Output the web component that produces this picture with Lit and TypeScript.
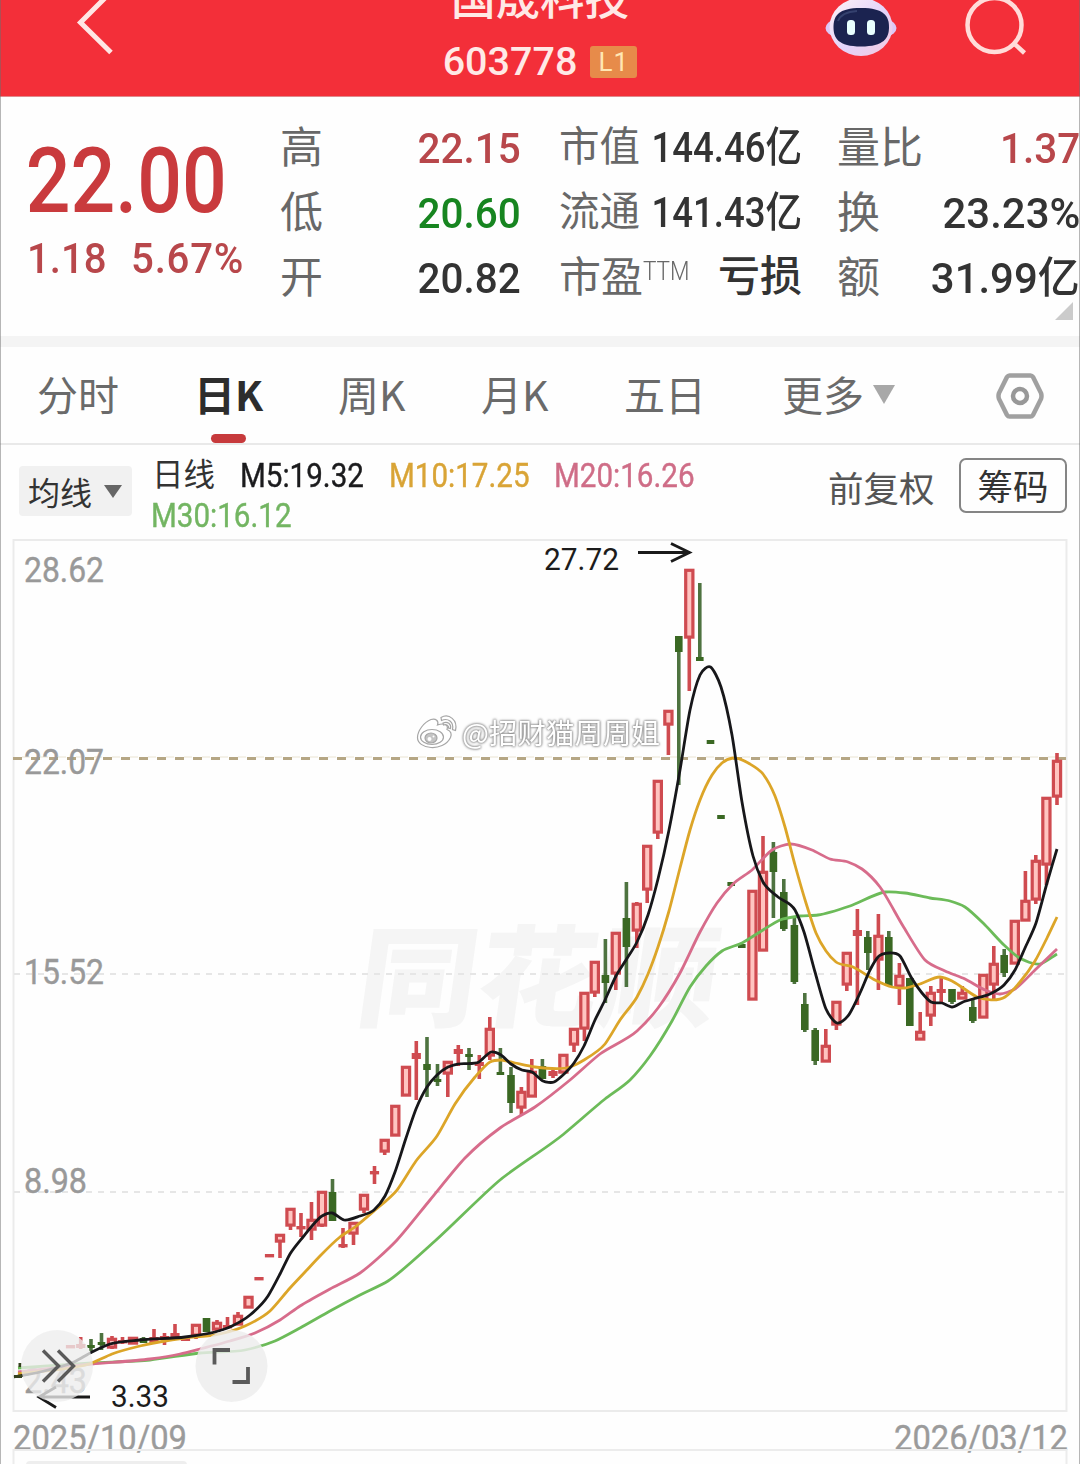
import { LitElement, html, svg, css } from "lit";
import { customElement } from "lit/decorators.js";

type Candle = [x: number, high: number, top: number, bottom: number, low: number, up: 0 | 1];
type Point = [number, number];

const CANDLES: Candle[] = [
  [70.5, 1345, 1345, 1347, 1347, 1], [80.7, 1337, 1344, 1348, 1349, 1], [91, 1339, 1345, 1347, 1351, 0],
  [101.5, 1333, 1342, 1345, 1350, 0], [112, 1336, 1338, 1348, 1349, 1], [122.5, 1337, 1340, 1342, 1344, 1],
  [133, 1337, 1337, 1344, 1344, 1], [143.5, 1337, 1338, 1343, 1343, 0], [154, 1329, 1337, 1343, 1344, 1],
  [164.5, 1333, 1336, 1340, 1345, 1], [175, 1324, 1333, 1338, 1340, 1], [185.5, 1337, 1337, 1341, 1341, 1],
  [196, 1324, 1324, 1336, 1339, 1], [206.5, 1318, 1318, 1332, 1332, 0], [217, 1320, 1322, 1330, 1332, 1],
  [227.5, 1317, 1325, 1328, 1328, 1], [238, 1312, 1315, 1325, 1325, 1], [248.5, 1296, 1296, 1308, 1308, 1],
  [259, 1278, 1277, 1280, 1280, 1], [269.5, 1255, 1254, 1257, 1257, 1], [280, 1234, 1234, 1242, 1258, 1],
  [290.5, 1208, 1208, 1226, 1230, 1], [301, 1213, 1226, 1229, 1237, 1], [311.5, 1202, 1219, 1230, 1240, 1],
  [322, 1191, 1191, 1226, 1227, 1], [332.5, 1179, 1192, 1221, 1221, 0], [343, 1228, 1244, 1247, 1248, 1],
  [353.5, 1222, 1222, 1234, 1245, 1], [364, 1194, 1194, 1210, 1213, 1], [374.5, 1166, 1171, 1174, 1184, 1],
  [384.7, 1139, 1139, 1152, 1155, 1], [395.3, 1105, 1105, 1136, 1136, 1], [406, 1066, 1066, 1096, 1096, 1],
  [416.3, 1041, 1053, 1059, 1100, 1], [427, 1037, 1064, 1070, 1097, 0], [437.5, 1064, 1079, 1082, 1086, 0],
  [447.8, 1061, 1061, 1074, 1097, 1], [458.3, 1045, 1049, 1054, 1066, 1], [469, 1048, 1054, 1057, 1070, 0],
  [479.3, 1055, 1062, 1066, 1079, 1], [489.8, 1017, 1028, 1056, 1060, 1], [500.4, 1048, 1072, 1075, 1075, 0],
  [511, 1067, 1075, 1103, 1113, 0], [521.4, 1087, 1091, 1108, 1115, 1], [531.8, 1059, 1071, 1097, 1097, 1],
  [542.4, 1059, 1066, 1079, 1079, 0], [553, 1068, 1071, 1076, 1078, 1], [563.4, 1054, 1054, 1073, 1073, 1],
  [574, 1028, 1028, 1045, 1052, 1], [584.4, 992, 992, 1029, 1041, 1], [594.8, 961, 961, 993, 997, 1],
  [605.4, 939, 975, 983, 1003, 0], [615.8, 932, 932, 974, 990, 1], [626.4, 882, 918, 947, 987, 0],
  [636.8, 902, 903, 931, 948, 1], [647.2, 845, 845, 890, 903, 1], [657.8, 780, 780, 833, 839, 1],
  [668.4, 710, 710, 725, 755, 1], [678.8, 636, 636, 652, 785, 0], [689.3, 569, 569, 638, 691, 1],
  [699.8, 583, 657, 661, 661, 0], [710.5, 740, 740, 744, 744, 0], [721, 815, 815, 819, 819, 0],
  [731.2, 882, 882, 886, 886, 0], [741.8, 944, 944, 948, 948, 0], [752.4, 890, 890, 1000, 1000, 1],
  [763, 836, 871, 951, 951, 1], [773.4, 842, 852, 872, 918, 0], [783.8, 879, 892, 929, 931, 0],
  [794.4, 918, 925, 982, 984, 0], [804.8, 993, 1004, 1030, 1032, 0], [815.2, 1028, 1030, 1061, 1065, 0],
  [825.8, 1029, 1045, 1062, 1062, 1], [836.4, 1001, 1001, 1025, 1030, 1], [846.8, 952, 952, 985, 991, 1],
  [857.4, 909, 930, 936, 1005, 1], [867.8, 931, 937, 953, 970, 0], [878.4, 914, 935, 960, 990, 1],
  [888.8, 931, 937, 986, 986, 0], [899.4, 963, 975, 987, 1005, 1], [909.8, 978, 978, 1026, 1026, 0],
  [920.2, 1012, 1031, 1040, 1040, 1], [930.8, 986, 992, 1016, 1026, 1], [941.2, 976, 989, 993, 1002, 1],
  [952, 989, 989, 1002, 1004, 0], [962.3, 986, 992, 999, 999, 1], [972.8, 1000, 1007, 1021, 1023, 0],
  [983.3, 974, 974, 1018, 1018, 1], [993.8, 946, 963, 985, 1001, 1], [1004.2, 949, 955, 973, 977, 0],
  [1014.8, 920, 920, 964, 964, 1], [1025.4, 871, 900, 921, 921, 1], [1035.8, 855, 860, 900, 904, 1],
  [1046.4, 797, 797, 865, 885, 1], [1057, 753, 760, 797, 805, 1],
];

const AVERAGES: { color: string; points: Point[] }[] = [
  {
    color: "#6cbb59",
    points: [[18, 1368], [92, 1363], [150, 1360], [200, 1353], [245, 1350], [275, 1341], [300, 1328], [330, 1311],
      [360, 1295], [388, 1281], [435, 1241], [500, 1180], [560, 1137], [605, 1099], [630, 1080], [650, 1056],
      [672, 1021], [690, 987], [706, 966], [722, 951], [742, 943], [763, 930], [780, 920], [800, 916], [818, 915],
      [850, 906], [885, 892], [905, 893], [930, 898], [950, 901], [965, 907], [985, 925], [1004, 945], [1018, 957],
      [1040, 964], [1057, 954]],
  },
  {
    color: "#d76c8b",
    points: [[18, 1372], [92, 1364], [150, 1359], [180, 1354], [200, 1349], [230, 1341], [255, 1333], [280, 1320],
      [300, 1306], [330, 1289], [360, 1273], [397, 1240], [430, 1200], [465, 1158], [500, 1128], [535, 1107],
      [570, 1080], [600, 1054], [637, 1031], [658, 1008], [680, 973], [700, 932], [717, 903], [733, 884], [752, 870],
      [772, 850], [790, 844], [812, 850], [830, 859], [848, 862], [862, 869], [880, 887], [903, 926], [925, 960],
      [945, 971], [965, 979], [985, 990], [1000, 994], [1015, 989], [1035, 970], [1057, 949]],
  },
  {
    color: "#dca528",
    points: [[18, 1374], [92, 1363], [112, 1354], [140, 1346], [185, 1338], [215, 1335], [245, 1326], [270, 1311],
      [290, 1288], [305, 1272], [320, 1256], [340, 1237], [355, 1227], [374, 1211], [397, 1190], [416, 1161],
      [437, 1136], [455, 1104], [475, 1077], [490, 1062], [501, 1060], [515, 1063], [535, 1067], [570, 1067],
      [584, 1060], [605, 1044], [620, 1020], [637, 997], [648, 974], [658, 947], [669, 911], [680, 868], [690, 830],
      [700, 800], [712, 775], [722, 763], [733, 758], [750, 764], [763, 774], [775, 796], [785, 827], [795, 865],
      [806, 903], [816, 933], [826, 951], [836, 962], [853, 967], [875, 980], [892, 987], [905, 988], [920, 984],
      [940, 977], [952, 981], [963, 988], [977, 997], [1005, 997], [1020, 982], [1035, 961], [1047, 938], [1057, 917]],
  },
  {
    color: "#17171a",
    points: [[14, 1377], [40, 1372], [74, 1362], [92, 1352], [110, 1344], [140, 1340], [185, 1337], [215, 1332],
      [232, 1326], [250, 1315], [268, 1296], [280, 1274], [290, 1254], [303, 1237], [322, 1216], [332, 1213],
      [344, 1220], [360, 1216], [374, 1210], [385, 1196], [395, 1172], [406, 1138], [416, 1109], [427, 1087],
      [437, 1075], [448, 1067], [458, 1064], [479, 1062], [491, 1052], [501, 1055], [511, 1064], [522, 1070],
      [532, 1072], [543, 1081], [554, 1082], [563, 1075], [574, 1063], [584, 1046], [595, 1020], [605, 1000],
      [616, 976], [626, 960], [637, 942], [648, 915], [658, 879], [669, 830], [680, 770], [690, 710], [700, 675],
      [710.5, 667], [721, 687], [732, 735], [742, 802], [753, 856], [763, 882], [778, 897], [795, 910], [804, 932],
      [815, 972], [826, 1009], [837, 1023], [848, 1016], [860, 993], [870, 970], [878, 957], [889, 953], [900, 956],
      [911, 977], [922, 993], [931, 1002], [942, 1003], [952, 1007], [963, 1002], [973, 999], [990, 994], [1004, 985],
      [1015, 970], [1025, 948], [1036, 923], [1047, 883], [1057, 849]],
  },
];

/** Joins the points with cubic segments whose tangents respect uneven x steps. */
function smooth(points: Point[]): string {
  const slope = points.map((p, i) => {
    const a = points[Math.max(i - 1, 0)];
    const b = points[Math.min(i + 1, points.length - 1)];
    if (a === p || b === p) return (b[1] - a[1]) / (b[0] - a[0]);
    const left = (p[1] - a[1]) / (p[0] - a[0]);
    const right = (b[1] - p[1]) / (b[0] - p[0]);
    const wl = b[0] - p[0];
    const wr = p[0] - a[0];
    return (left * wl + right * wr) / (wl + wr);
  });
  let d = `M${points[0][0]} ${points[0][1]}`;
  for (let i = 0; i < points.length - 1; i++) {
    const [x1, y1] = points[i];
    const [x2, y2] = points[i + 1];
    const step = (x2 - x1) / 4;
    d += `C${x1 + step} ${y1 + slope[i] * step} ${x2 - step} ${y2 - slope[i + 1] * step} ${x2} ${y2}`;
  }
  return d;
}

@customElement("stock-header")
class StockHeader extends LitElement {
  static styles = css`
    :host { display: block; height: 97px; overflow: hidden; background: #f32f39; border-bottom: 1px solid #e08a8d; box-sizing: border-box; }
    .bar { display: grid; grid-template-columns: 400px 280px 1fr; height: 97px; }
    .back { display: block; }
    .center { display: flex; flex-direction: column; align-items: center; margin-top: -30px; color: #ffe9e6; }
    .name { font: 500 44.5px/52px "Noto Sans CJK SC", sans-serif; height: 52px; }
    .codes { display: flex; align-items: center; gap: 13px; margin-top: 20px; }
    .code { font: 500 39.5px/40px Roboto, sans-serif; }
    .badge { width: 47px; height: 32px; border-radius: 3px; background: #e78b4a; color: #ffe7b4; font: 400 26px/33px Roboto, sans-serif; text-align: center; letter-spacing: 1px; }
  `;
  render() {
    return html`
      <div class="bar">
        <svg class="back" width="400" height="97" viewBox="0 0 400 97">
          <path d="M112 -9 80.500 22.500 111 52.500" fill="none" stroke="#ffe6e4" stroke-width="5" />
        </svg>
        <div class="center">
          <div class="name">国晟科技</div>
          <div class="codes"><span class="code">603778</span><span class="badge">L1</span></div>
        </div>
        <svg width="400" height="97" viewBox="680 0 400 97">
          <defs>
            <linearGradient id="shell" x1="0" y1="0" x2="1" y2="1">
              <stop offset="0" stop-color="#fff3f6" /><stop offset=".55" stop-color="#e3d3fa" /><stop offset="1" stop-color="#f5c9dd" />
            </linearGradient>
          </defs>
          <ellipse cx="861" cy="28" rx="35.500" ry="14" fill="#dcc8f6" />
          <ellipse cx="861" cy="27" rx="31.500" ry="29" fill="url(#shell)" />
          <path d="M861 8C884 8 889 16 889 27S884 46.500 861 46.500 833.500 38 833.500 27 838 8 861 8Z" fill="#1b2350" />
          <path d="M838 21C841 13 849 11.500 857 11" fill="none" stroke="#35416e" stroke-width="2" />
          <rect x="847" y="20" width="8" height="15" rx="3.500" fill="#e9ffff" />
          <rect x="867" y="20" width="8" height="15" rx="3.500" fill="#e9ffff" />
          <circle cx="994.500" cy="25" r="27" fill="none" stroke="#ffdcd9" stroke-width="4.500" />
          <path d="M1013 42.500 1024.500 53" stroke="#ffdcd9" stroke-width="4.500" />
        </svg>
      </div>
    `;
  }
}

@customElement("stock-quote")
class StockQuote extends LitElement {
  static styles = css`
    :host { display: block; height: 239px; overflow: hidden; background: #fefefe; }
    .quote { display: grid; grid-template-columns: 253px 240px 281px 278px; padding-left: 28px; box-sizing: border-box; width: 1080px; }
    .price { padding-top: 33px; color: #c93a3d; font-family: Roboto, sans-serif; }
    .last { font-weight: 500; font-size: 90px; line-height: 104px; margin-left: -4px; padding-left: 2px; transform: scaleX(0.875); transform-origin: left; white-space: nowrap; }
    .change { display: flex; gap: 26px; font-weight: 500; font-size: 43px; line-height: 48px; color: #b8474b; margin-left: -1px; transform: scaleX(0.935); transform-origin: left; }
    .change .percent { letter-spacing: 0.8px; }
    .col { display: grid; grid-template-rows: repeat(3, 65px); padding-top: 18px; }
    .mid { margin-left: 38px; }
    .end { margin-left: 36px; }
    .row { display: flex; justify-content: space-between; align-items: center; white-space: nowrap; }
    .label { font: 400 43px/64px "Noto Sans CJK SC", sans-serif; color: #686868; position: relative; top: -4px; left: -1px; }
    .mid .label { font-size: 40.5px; left: 0; }
    .mid .label.ratio { font-size: 42px; }
    .label sup { display: inline-block; font: 300 25px/25px Roboto, sans-serif; vertical-align: 12px; transform: scaleX(0.9); transform-origin: left; margin-right: -5px; }
    .value { font: 500 43px/64px Roboto, "Noto Sans CJK SC", sans-serif; color: #333; transform: scaleX(0.94); transform-origin: right; }
    .value.wide { transform: scaleX(0.975); }
    .mid .value { font-size: 42px; transform: scaleX(0.87); margin-left: -40px; }
    .mid .value.word { font-size: 42px; transform: none; margin-left: 0; position: relative; top: -1px; }
    .up { color: #b8474b; }
    .down { color: #178520; }
    .fold { position: absolute; left: 1055px; top: 302px; }
  `;
  render() {
    return html`
      <div class="quote">
        <div class="price">
          <div class="last">22.00</div>
          <div class="change"><span>1.18</span><span class="percent">5.67%</span></div>
        </div>
        <div class="col">
          <div class="row"><span class="label">高</span><span class="value up">22.15</span></div>
          <div class="row"><span class="label">低</span><span class="value down">20.60</span></div>
          <div class="row"><span class="label">开</span><span class="value">20.82</span></div>
        </div>
        <div class="col mid">
          <div class="row"><span class="label">市值</span><span class="value">144.46亿</span></div>
          <div class="row"><span class="label">流通</span><span class="value">141.43亿</span></div>
          <div class="row"><span class="label ratio">市盈<sup>TTM</sup></span><span class="value word">亏损</span></div>
        </div>
        <div class="col end">
          <div class="row"><span class="label">量比</span><span class="value up">1.37</span></div>
          <div class="row"><span class="label">换</span><span class="value wide">23.23%</span></div>
          <div class="row"><span class="label">额</span><span class="value wide">31.99亿</span></div>
        </div>
      </div>
      <svg class="fold" width="18" height="18"><path d="M18 0V18H0Z" fill="#cbcbcb" /></svg>
    `;
  }
}

@customElement("period-tabs")
class PeriodTabs extends LitElement {
  static styles = css`
    :host { display: block; border-top: 11px solid #f4f4f4; border-bottom: 2px solid #e9e9e9; height: 109px; box-sizing: border-box; background: #fefefe; }
    .tabs { display: grid; grid-template-columns: 157px 144px 143px 143px 158px 213px 48px; padding-left: 37px; height: 96px; align-items: center; }
    .tab { display: flex; align-items: center; gap: 9px; font: 400 41px/60px "Noto Sans CJK SC", sans-serif; color: #6a6a6a; height: 97px; margin-top: -5px; }
    .tab.active { font-weight: 700; color: #2d2d2d; position: relative; }
    .tab.active::after { content: ""; position: absolute; left: 17px; bottom: -2px; width: 35px; height: 9px; border-radius: 5px; background: #c73a3c; }
    .arrow { margin-top: 4px; }
    .settings { position: relative; top: 1px; left: 1px; }
  `;
  render() {
    return html`
      <div class="tabs">
        <span class="tab">分时</span>
        <span class="tab active">日K</span>
        <span class="tab">周K</span>
        <span class="tab">月K</span>
        <span class="tab">五日</span>
        <span class="tab">更多<svg class="arrow" width="22" height="19"><path d="M0 0H22L11 19Z" fill="#a8a8a8" /></svg></span>
        <svg class="settings" width="48" height="48" viewBox="996 372 48 48">
          <path d="M1009.500 375.500H1030.500Q1032 375.500 1033 377L1041 393Q1042 396 1041 399L1033 415Q1032 416.500 1030.500 416.500H1009.500Q1008 416.500 1007 415L999 399Q998 396 999 393L1007 377Q1008 375.500 1009.500 375.500Z" fill="none" stroke="#a0a0a0" stroke-width="4.500" />
          <circle cx="1020" cy="396" r="7" fill="none" stroke="#989898" stroke-width="4.500" />
        </svg>
      </div>
    `;
  }
}

@customElement("average-legend")
class AverageLegend extends LitElement {
  static styles = css`
    :host { display: block; height: 85px; background: #fefefe; }
    .legend { display: flex; align-items: flex-start; padding: 13px 13px 0 19px; height: 85px; box-sizing: border-box; font-family: "Noto Sans CJK SC", sans-serif; }
    .picker { display: flex; align-items: center; gap: 12px; width: 113px; height: 50px; margin-top: 8px; padding-left: 9px; box-sizing: border-box; background: #f1f1f1; border-radius: 4px; font-size: 32px; line-height: 50px; color: #333; }
    .lines { display: grid; grid-template-columns: 89px 148.500px 165.500px 150px; grid-template-rows: 40px 38px; margin-left: 20px; width: 600px; line-height: 38px; }
    .cap { font-size: 31.5px; color: #333; line-height: 29px; }
    .ma { font: 400 32.5px/36px Roboto, sans-serif; -webkit-text-stroke: 0.4px currentColor; white-space: nowrap; transform: scaleX(0.91); transform-origin: left; margin-left: -1px; }
    .m5 { color: #1b1b1d; }
    .m10 { color: #d9a436; }
    .m20 { color: #cf6d87; }
    .m30 { color: #73b562; }
    .adjust { font-size: 35.5px; line-height: 40px; color: #555; margin: 9px 0 0 76px; width: 107px; white-space: nowrap; }
    .chips { margin: 0 0 0 auto; width: 108px; height: 55px; box-sizing: border-box; border: 2px solid #858585; border-radius: 7px; font-size: 35.5px; line-height: 50px; color: #333; text-align: center; }
  `;
  render() {
    return html`
      <div class="legend">
        <div class="picker"><span>均线</span><svg width="18" height="13"><path d="M0 0H18L9 13Z" fill="#666" /></svg></div>
        <div class="lines">
          <span class="cap">日线</span>
          <span class="ma m5">M5:19.32</span>
          <span class="ma m10">M10:17.25</span>
          <span class="ma m20">M20:16.26</span>
          <span class="ma m30">M30:16.12</span>
        </div>
        <span class="adjust">前复权</span>
        <div class="chips">筹码</div>
      </div>
    `;
  }
}

@customElement("candle-chart")
class CandleChart extends LitElement {
  static styles = css`
    :host { display: block; height: 934px; background: #fefefe; }
    svg { display: block; }
    .num { font-family: Roboto, sans-serif; }
    .axis { font-size: 35px; fill: #999; stroke: #999; stroke-width: 0.4; }
    .mark { font-size: 30.5px; fill: #1c1c1c; }
    .brand { font: 900 110px "Noto Sans CJK SC", sans-serif; fill: #f5f5f5; }
    .author { font: 400 28px "Noto Sans CJK SC", sans-serif; fill: #fff; filter: drop-shadow(0 0 1px #888) drop-shadow(0 0 1px #999); }
    .date { font-size: 35px; fill: #9b9b9b; stroke: #9b9b9b; stroke-width: 0.4; }
  `;

  private label(text: string, x: number, y: number, width: number, cls: string) {
    return svg`<text class="num ${cls}" x=${x} y=${y} textLength=${width} lengthAdjust="spacingAndGlyphs">${text}</text>`;
  }

  private candle([x, high, top, bottom, low, up]: Candle) {
    const color = up ? "#cf4b50" : "#3a6823";
    const h = bottom - top;
    const body = !up
      ? svg`<rect x=${x - 3.8} y=${top} width="7.600" height=${Math.max(h, 3)} fill=${color} />`
      : h > 6
        ? svg`<rect x=${x - 3.6} y=${top + 1.3} width="7.200" height=${h - 2.2} fill="#ffc4c0" stroke=${color} stroke-width="3.200" />`
        : svg`<rect x=${x - 4.6} y=${top} width="9.200" height=${Math.max(h, 3.4)} fill=${color} />`;
    return svg`
      <path d="M${x} ${high}V${top}M${x} ${bottom}V${low}" stroke=${up ? color : "#4e7340"} stroke-width="3.600" />
      ${body}`;
  }

  render() {
    return html`
      <svg width="1080" height="934" viewBox="0 530 1080 934">
        <g transform="translate(353 1018) skewX(-8)"><text class="brand" x="0" y="0" textLength="360" lengthAdjust="spacingAndGlyphs">同花顺</text></g>
        <rect x="13.500" y="540" width="1053" height="871" fill="none" stroke="#ebebeb" stroke-width="2" />
        <path d="M14 974H1066M14 1192H1066" stroke="#e6e6e6" stroke-width="2" stroke-dasharray="6 6" />
        <path d="M13 758.500H1066" stroke="#b5a684" stroke-width="2.800" stroke-dasharray="9 9" />
        <path d="M22 757H1066" stroke="#e9e4d2" stroke-width="1.200" stroke-dasharray="8 10" />
        ${this.label("28.62", 24, 582, 80, "axis")}
        ${this.label("22.07", 24, 773.5, 80, "axis")}
        ${this.label("15.52", 24, 983.5, 80, "axis")}
        ${this.label("8.98", 24, 1192.5, 63, "axis")}
        ${this.label("2.43", 24, 1393, 63, "axis")}
        ${CANDLES.map((c) => this.candle(c))}
        ${AVERAGES.map((a) => svg`<path d=${smooth(a.points)} fill="none" stroke=${a.color} stroke-width="2.800" stroke-linejoin="round" />`)}
        <path d="M14 1376.500H22M20 1363V1367" stroke="#35421f" stroke-width="3" />
        ${this.label("27.72", 544, 570, 75, "mark")}
        <path d="M638 552.500H689M671 543.500 689.500 552.500 671 561.500" fill="none" stroke="#1a1a1a" stroke-width="2.800" />
        ${this.label("3.33", 111, 1407, 58, "mark")}
        <path d="M90 1397H39M56 1387 39 1397 56 1407.500" fill="none" stroke="#1a1a1a" stroke-width="2.800" />
        <circle cx="57" cy="1366" r="36" fill="#ededed" fill-opacity="0.780" />
        <path d="M43 1350.500 58.500 1366 43 1381.500M58 1350.500 73.500 1366 58 1381.500" fill="none" stroke="#5a5a5a" stroke-width="3.400" />
        <circle cx="231.500" cy="1366" r="36" fill="#ededed" fill-opacity="0.820" />
        <path d="M214.500 1364.500V1350H230M232.500 1382H248V1367" fill="none" stroke="#5a5a5a" stroke-width="3.800" />
        <g fill="#fff" stroke="#a6a6a6" stroke-width="1.200">
          <path d="M431 719.500C436 718 439 721 437.500 725 443 723 449 724 447 729.500 451 731 452 734 450.500 737.500 447 745 438 748 431 747.500 423 747 417.500 743 417.500 737.500 417.500 731 424 722 431 719.500Z" />
          <ellipse cx="432" cy="737" rx="11.500" ry="7.500" />
          <ellipse cx="431" cy="738" rx="6" ry="5" fill="#c4c4c4" />
          <circle cx="429.500" cy="739" r="2" stroke="none" />
          <circle cx="433.500" cy="736.500" r="1" stroke="none" />
          <path d="M441 717.500C449 713 458 720 455.500 730.500L452.500 729.500C454 722 448 717.500 441.500 720.500Z" />
          <path d="M443 723C447.500 721 451.500 724 450.500 728.500L448.500 728C449 725.500 446.500 724 443.500 725Z" />
        </g>
        <text class="author" x="462" y="744" textLength="198" lengthAdjust="spacingAndGlyphs">@招财猫周周姐</text>
        ${this.label("2025/10/09", 13, 1449.5, 174, "date")}
        ${this.label("2026/03/12", 894, 1449.5, 174, "date")}
        <path d="M13.500 1464V1450H1066.500V1464" fill="none" stroke="#ececec" stroke-width="2" />
        <rect x="26" y="1461" width="161" height="10" rx="4" fill="#eee" />
      </svg>
    `;
  }
}

@customElement("app-root")
class AppRoot extends LitElement {
  static styles = css`
    :host { display: block; width: 1080px; height: 1464px; overflow: hidden; position: relative; background: #fefefe; }
    .edge { position: absolute; inset: 0; border-left: 1px solid rgba(110, 110, 110, 0.5); border-right: 1px solid rgba(110, 110, 110, 0.5); pointer-events: none; }
  `;
  render() {
    return html`
      <stock-header></stock-header>
      <stock-quote></stock-quote>
      <period-tabs></period-tabs>
      <average-legend></average-legend>
      <candle-chart></candle-chart>
      <div class="edge"></div>
    `;
  }
}
